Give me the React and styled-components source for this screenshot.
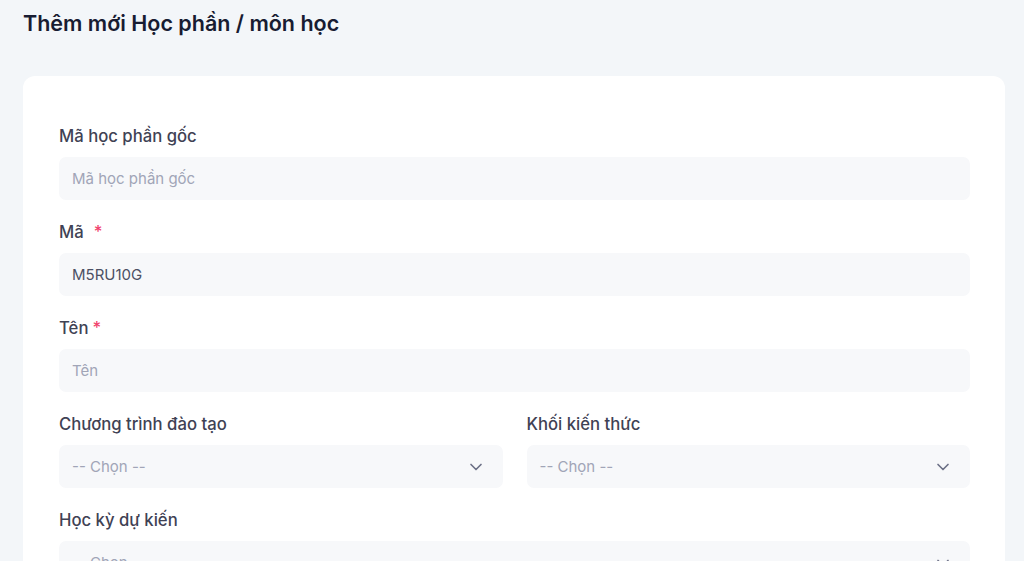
import React from "react";
import styled, { createGlobalStyle } from "styled-components";
import { ChevronDown } from "lucide-react";

const GlobalStyle = createGlobalStyle`
  html, body {
    margin: 0;
    padding: 0;
    background: #f3f6f9;
    font-family: Inter, "Noto Sans", sans-serif;
    overflow: hidden;
  }
`;

const Page = styled.div`
  padding: 8px 19px 0 23px;
`;

const Title = styled.h1`
  margin: 0 0 38px;
  font-size: 21.5px;
  line-height: 30px;
  font-weight: 600;
  color: #181c32;
`;

const Card = styled.div`
  background: #ffffff;
  border-radius: 12px;
  padding: 48px 35px 40px 36px;
  display: flex;
  flex-direction: column;
  gap: 20px;
`;

const Row = styled.div`
  display: grid;
  grid-template-columns: 1fr 1fr;
  gap: 24px;
`;

const Field = styled.div`
  display: flex;
  flex-direction: column;
`;

const Label = styled.label`
  font-size: 16.7px;
  line-height: 24px;
  font-weight: 500;
  color: #3f4254;
  margin-bottom: 9px;
`;

const Required = styled.span`
  color: #f1416c;
  margin-left: ${(p) => p.$gap}px;
`;

const Input = styled.input`
  box-sizing: border-box;
  height: 43px;
  border: none;
  outline: none;
  border-radius: 7px;
  background: #f7f8fa;
  padding: 0 13px;
  font-family: inherit;
  font-size: 15px;
  color: #4b5064;
  &::placeholder {
    color: #a1a5b7;
  }
`;

const Select = styled.div`
  box-sizing: border-box;
  height: 43px;
  border-radius: 7px;
  background: #f7f8fa;
  padding: 0 17px 0 13px;
  display: flex;
  align-items: center;
  justify-content: space-between;
  font-size: 15px;
  color: #a1a5b7;
`;

const SelectField = ({ label }) => (
  <Field>
    <Label>{label}</Label>
    <Select>
      <span>-- Chọn --</span>
      <ChevronDown size={20} color="#6c7086" strokeWidth={2} />
    </Select>
  </Field>
);

export default function App() {
  return (
    <>
      <GlobalStyle />
      <Page>
        <Title>Thêm mới Học phần / môn học</Title>
        <Card>
          <Field>
            <Label>Mã học phần gốc</Label>
            <Input placeholder="Mã học phần gốc" />
          </Field>
          <Field>
            <Label>
              Mã<Required $gap={10}>*</Required>
            </Label>
            <Input defaultValue="M5RU10G" />
          </Field>
          <Field>
            <Label>
              Tên<Required $gap={4}>*</Required>
            </Label>
            <Input placeholder="Tên" />
          </Field>
          <Row>
            <SelectField label="Chương trình đào tạo" />
            <SelectField label="Khối kiến thức" />
          </Row>
          <SelectField label="Học kỳ dự kiến" />
        </Card>
      </Page>
    </>
  );
}
